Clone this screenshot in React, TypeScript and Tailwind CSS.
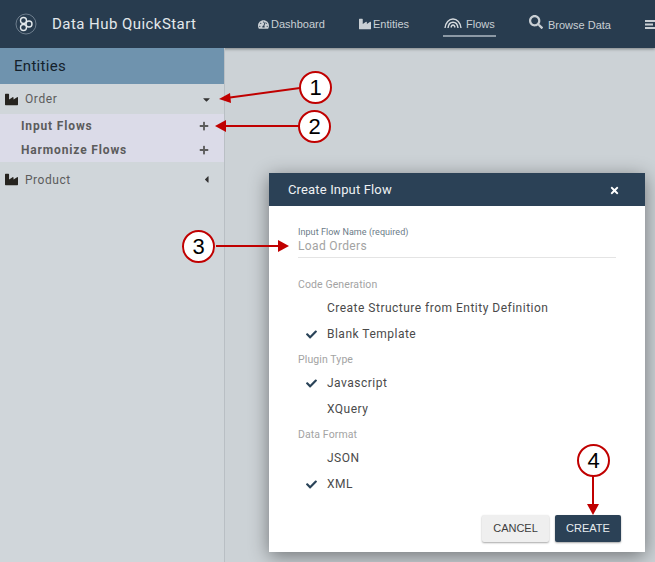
import { FaCaretDown, FaCaretLeft, FaCheck, FaIndustry, FaPlus, FaSearch, FaTachometerAlt, FaTimes } from 'react-icons/fa';

function Logo() {
  return (
    <svg width="22" height="22" viewBox="0 0 22 22" fill="none" stroke="#e4e9ec" className="shrink-0">
      <circle cx="11" cy="11" r="10" strokeWidth="0.7" stroke="#8b9aa7" />
      <circle cx="8.500" cy="7.500" r="3" strokeWidth="1.400" />
      <circle cx="8.500" cy="14.500" r="3" strokeWidth="1.400" />
      <circle cx="14" cy="11" r="3" strokeWidth="1.400" />
    </svg>
  );
}

function FlowsIcon() {
  return (
    <svg width="18" height="11" viewBox="0 0 18 11" fill="none" stroke="#d5dade" strokeWidth="1.400" className="shrink-0">
      <path d="M1 10C1.500 4.500 5 1 9 1s7.500 3.500 8 9" />
      <path d="M4 10c.4-3.500 2.500-5.800 5-5.800s4.600 2.300 5 5.800" />
      <path d="M7 9.500c.3-1.500 1-2.500 2-2.500s1.700 1 2 2.500" />
    </svg>
  );
}

function ListIcon() {
  return (
    <svg width="12" height="9" viewBox="0 0 12 9" fill="#c9cfd4" className="shrink-0">
      <rect x="0" y="0" width="12" height="2" />
      <rect x="0" y="3.500" width="8" height="2" />
      <rect x="0" y="7" width="10" height="2" />
    </svg>
  );
}

function Badge({ n, className }: { n: number; className: string }) {
  return (
    <div className={`absolute flex h-[33px] w-[33px] items-center justify-center rounded-full border-2 border-[#c00000] bg-white font-['Liberation_Sans',sans-serif] text-[22px] text-black ${className}`}>
      {n}
    </div>
  );
}

function Option({ label, checked }: { label: string; checked?: boolean }) {
  return (
    <div className="flex h-[26px] items-center">
      <span className="flex w-[29px] shrink-0 pl-[8px] text-[11px] text-[#2a4358]">{checked && <FaCheck />}</span>
      <span className="text-[12px] tracking-[0.49px] text-[#4a4a4a]">{label}</span>
    </div>
  );
}

function GroupLabel({ children }: { children: string }) {
  return <div className="flex h-[13px] items-center text-[10.5px] tracking-[0.1px] text-[#a3a3a3]">{children}</div>;
}

export default function App() {
  return (
    <div className="relative flex h-[562px] w-[655px] flex-col overflow-hidden bg-[#ccd2d6] font-['Roboto',sans-serif]">
      <header className="flex h-[48px] shrink-0 items-center bg-[#283c4f] pl-[15px] shadow-[0_1px_3px_rgba(0,0,0,0.4)]">
        <Logo />
        <span className="ml-[15px] w-[206px] shrink-0 text-[15px] tracking-[0.45px] text-[#e3e8eb]">Data Hub QuickStart</span>
        <nav className="flex items-center font-['Liberation_Sans',sans-serif] text-[11px] text-[#c9cfd4]">
          <div className="flex w-[101px] shrink-0 items-center gap-[2px]">
            <FaTachometerAlt className="text-[11px]" /> Dashboard
          </div>
          <div className="flex w-[84px] shrink-0 items-center gap-[2px]">
            <FaIndustry className="text-[12px]" /> Entities
          </div>
          <div className="flex w-[86px] shrink-0">
            <div className="flex items-center gap-[4px] border-b-2 border-[#8c99a5] px-[1px] pt-[3px] pb-[3px]">
              <FlowsIcon />
              <span className="pt-[2px]">Flows</span>
            </div>
          </div>
          <div className="flex w-[116px] shrink-0 items-center gap-[5px]">
            <FaSearch className="mb-[4px] text-[14px]" />
            <span className="pt-[2px]">Browse Data</span>
          </div>
          <ListIcon />
        </nav>
      </header>

      <div className="flex min-h-0 flex-1">
        <aside className="w-[225px] shrink-0 border-r border-[#b9bfc4] bg-[#d0d6da]">
          <div className="flex h-[36px] items-center bg-[#6f93ae] pl-[14px] text-[15px] tracking-[0.3px] text-[#14212c]">Entities</div>
          <div className="flex h-[30px] items-center pr-[12px] pl-[5px] text-[12px] tracking-[0.6px] text-[#5c5c5c]">
            <FaIndustry className="text-[13px] text-[#26241f]" />
            <span className="ml-[7px] flex-1">Order</span>
            <FaCaretDown className="text-[11px] text-[#333]" />
          </div>
          <div className="bg-[#dbdbe8] text-[12px] font-bold tracking-[0.85px] text-[#5c5c5c]">
            <div className="flex h-[24px] items-center pr-[15px] pl-[21px]">
              <span className="flex-1">Input Flows</span>
              <FaPlus className="text-[10px]" />
            </div>
            <div className="flex h-[24px] items-center pr-[15px] pl-[21px]">
              <span className="flex-1">Harmonize Flows</span>
              <FaPlus className="text-[10px]" />
            </div>
          </div>
          <div className="flex h-[34px] items-center pt-[1px] pr-[12px] pl-[5px] text-[12px] tracking-[0.55px] text-[#5c5c5c]">
            <FaIndustry className="text-[13px] text-[#26241f]" />
            <span className="ml-[7px] flex-1">Product</span>
            <FaCaretLeft className="text-[11px] text-[#333]" />
          </div>
        </aside>
        <main className="flex-1" />
      </div>

      <div className="absolute top-[173px] left-[269px] flex h-[379px] w-[376px] flex-col bg-white shadow-[0_4px_18px_rgba(0,0,0,0.45)]">
        <div className="flex h-[33px] shrink-0 items-center justify-between bg-[#2b4156] pr-[25px] pl-[19px] text-[13px] tracking-[0.15px] text-[#eef1f3]">
          <span>Create Input Flow</span>
          <FaTimes className="mt-[1px] text-[11px] text-white" />
        </div>
        <div className="flex flex-1 flex-col px-[29px] pt-[20px]">
          <div className="mr-[-1px] w-[318px] border-b border-[#e4e4e4] pb-[3px]">
            <div className="text-[9px] leading-[12px] tracking-[0.05px] text-[#6b7b88]">Input Flow Name (required)</div>
            <div className="mt-[1px] text-[12px] leading-[15px] tracking-[0.35px] text-[#a3a3a3]">Load Orders</div>
          </div>
          <div className="mt-[20px]"><GroupLabel>Code Generation</GroupLabel></div>
          <div className="mt-[4px]">
            <Option label="Create Structure from Entity Definition" />
            <Option label="Blank Template" checked />
          </div>
          <div className="mt-[6px]"><GroupLabel>Plugin Type</GroupLabel></div>
          <div className="mt-[4px]">
            <Option label="Javascript" checked />
            <Option label="XQuery" />
          </div>
          <div className="mt-[6px]"><GroupLabel>Data Format</GroupLabel></div>
          <div className="mt-[4px]">
            <Option label="JSON" />
            <Option label="XML" checked />
          </div>
          <div className="mt-[18px] mr-[-5px] flex justify-end gap-[6px] font-['Liberation_Sans',sans-serif] text-[11px]">
            <button className="h-[27px] w-[67px] rounded-[2px] bg-[#efefef] text-[#3d3d3d] shadow-[0_1px_2px_rgba(0,0,0,0.35)]">CANCEL</button>
            <button className="h-[27px] w-[66px] rounded-[2px] bg-[#2b4156] text-[#e8ecef] shadow-[0_1px_2px_rgba(0,0,0,0.35)]">CREATE</button>
          </div>
        </div>
      </div>

      {/* callout arrows sit on top of the screenshot */}
      <svg width="655" height="562" className="pointer-events-none absolute inset-0">
        <g stroke="#c00000" strokeWidth="2" fill="#c00000">
          <path d="M300 88L230 97.500" />
          <path d="M219 99l11-6 1 10z" strokeWidth="0" />
          <path d="M300 126H226" />
          <path d="M215 126l11-6v12z" strokeWidth="0" />
          <path d="M216 246H278" />
          <path d="M289 246l-11-6v12z" strokeWidth="0" />
          <path d="M593 476V505" />
          <path d="M593 515l-6-11h12z" strokeWidth="0" />
        </g>
      </svg>
      <Badge n={1} className="top-[71px] left-[299px]" />
      <Badge n={2} className="top-[110px] left-[298px]" />
      <Badge n={3} className="top-[230px] left-[182px]" />
      <Badge n={4} className="top-[444px] left-[577px]" />
    </div>
  );
}
